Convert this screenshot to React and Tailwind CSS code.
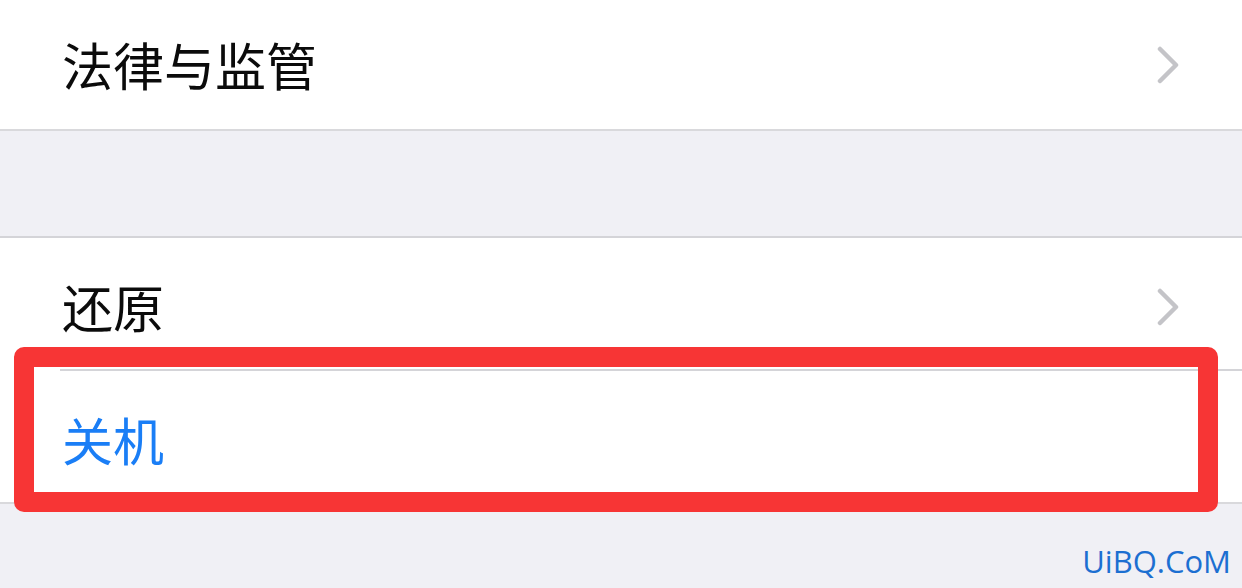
import React from 'react';

const cjk = { fontFamily: '"Noto Sans CJK SC", "Noto Sans", sans-serif' };

function Chevron() {
  return (
    <svg width="24" height="38" viewBox="0 0 24 38" className="shrink-0">
      <polyline
        points="4,3 20,19 4,35"
        fill="none"
        stroke="#c4c4c8"
        strokeWidth="4.5"
        strokeLinecap="round"
        strokeLinejoin="round"
      />
    </svg>
  );
}

function Row({ label, blue, chevron, className = '' }) {
  return (
    <div className={`flex items-center justify-between bg-white pl-[62px] pr-[62px] ${className}`}>
      <span
        style={cjk}
        className={`text-[51px] leading-none ${blue ? 'text-[#1a7ef6]' : 'text-[#0b0b0b]'}`}
      >
        {label}
      </span>
      {chevron && <Chevron />}
    </div>
  );
}

export default function App() {
  return (
    <div className="relative w-[1242px] h-[588px] overflow-hidden bg-[#f0f0f5]">
      <Row label="法律与监管" chevron className="h-[131px] border-b-[2px] border-[#d9d9dc]" />
      <div className="h-[105px]" />
      <div className="border-t-[2px] border-[#d4d4d8] border-b-[2px] border-b-[#d9d9dc] bg-white">
        <Row label="还原" chevron className="h-[131px] pt-[6px]" />
        <div className="ml-[60px] h-[2px] bg-[#d4d4d8]" />
        <Row label="关机" blue className="h-[131px] pt-[6px]" />
      </div>

      <div className="absolute left-[14px] top-[347px] w-[1204px] h-[165px] rounded-[10px] border-[20px] border-[#f73535]" />

      <div
        className="absolute right-[11px] bottom-[11px] text-[31px] leading-none text-[#1c6fd1]"
        style={{ fontFamily: '"Open Sans", "Noto Sans", sans-serif' }}
      >
        UiBQ.CoM
      </div>
    </div>
  );
}
